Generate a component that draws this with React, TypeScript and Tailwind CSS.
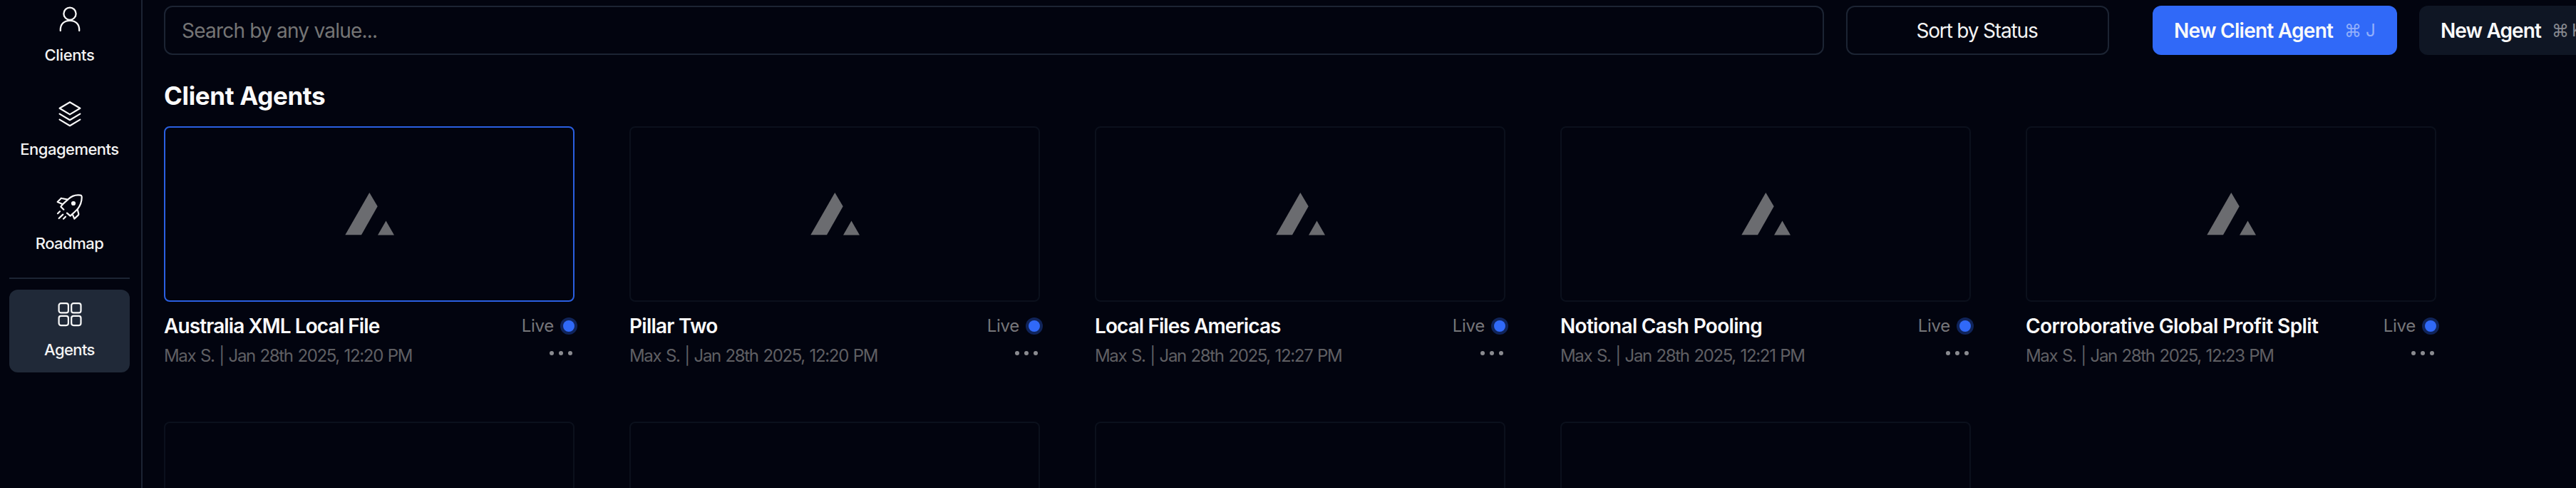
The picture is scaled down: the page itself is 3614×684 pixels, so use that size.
import type { ReactNode } from "react";

const stroke = {
  fill: "none",
  stroke: "#f8f8f8",
  strokeLinecap: "round",
  strokeLinejoin: "round",
} as const;

function UserIcon() {
  return (
    <svg className="size-10" viewBox="0 0 40 40" {...stroke} strokeWidth="2.3">
      <circle cx="20" cy="12.2" r="8.6" />
      <path d="M6.8 36v-1.2c0-8 5.2-13 13.2-13s13.2 5 13.2 13V36" />
    </svg>
  );
}

function LayersIcon() {
  return (
    <svg className="size-10" viewBox="0 0 40 40" {...stroke} strokeWidth="2.2">
      <path d="M20 4.2 34.4 12.8 20 21.4 5.6 12.8Z" />
      <path d="M5.6 20.6 20 29.2 34.4 20.6" />
      <path d="M5.6 28.6 20 37.2 34.4 28.6" />
    </svg>
  );
}

function RocketIcon() {
  return (
    <svg className="size-10" viewBox="234 36 120 120" {...stroke} strokeWidth="6.6">
      <path d="M268 104 256 92Q260 84 287 61C299 49 319 41 339 44Q343 44.5 344 50C345 68 339 86 326 103Q312 117 296 131L282 119" />
      <path d="M284 62 260 57Q257 56 255 59L242 72 262 81" />
      <path d="M326 103 331 123Q331 126 329 128L313 143 305 124" />
      <path d="M252 112 243 121M265 125 248 141M276 134 267 143" />
      <circle cx="309" cy="78" r="6" fill="#f8f8f8" />
    </svg>
  );
}

function GridIcon() {
  return (
    <svg className="size-10" viewBox="0 0 40 40" {...stroke} strokeWidth="2.2">
      <rect x="4.6" y="5.1" width="13.3" height="13.3" rx="3" />
      <rect x="22.2" y="5.1" width="13.3" height="13.3" rx="3" />
      <rect x="4.6" y="22.8" width="13.3" height="13.3" rx="3" />
      <rect x="22.2" y="22.8" width="13.3" height="13.3" rx="3" />
    </svg>
  );
}

function NavItem({ icon, label, spacing, active = false }: { icon: ReactNode; label: string; spacing: string; active?: boolean }) {
  return (
    <a className={`flex h-[116px] w-full shrink-0 flex-col items-center rounded-xl pt-3.5 ${active ? "bg-[#202938]" : ""}`}>
      {icon}
      <span className={`mt-[15px] text-[22px] leading-[30px] font-medium text-[#f4f4f4] ${spacing}`}>{label}</span>
    </a>
  );
}

function Logo() {
  return (
    <svg className="h-[60px] w-[69px]" viewBox="0 0 69 60" fill="#6b6c70">
      <path d="M0.3 59.3 34.3 0 45.7 19.3 23 59.3Z" />
      <path d="M46 59.6 57.5 39.5 69 59.6Z" />
    </svg>
  );
}

type Agent = { title: string; spacing: string; time: string };

const agents: Agent[] = [
  { title: "Australia XML Local File", spacing: "tracking-[-0.9px]", time: "12:20 PM" },
  { title: "Pillar Two", spacing: "tracking-[-0.75px]", time: "12:20 PM" },
  { title: "Local Files Americas", spacing: "tracking-[-0.92px]", time: "12:27 PM" },
  { title: "Notional Cash Pooling", spacing: "tracking-[-0.7px]", time: "12:21 PM" },
  { title: "Corroborative Global Profit Split", spacing: "tracking-[-0.58px]", time: "12:23 PM" },
];

function Preview({ selected = false, children }: { selected?: boolean; children?: ReactNode }) {
  return (
    <div className={`flex h-[246px] items-center justify-center rounded-lg border-2 ${selected ? "border-[#2a5fe0]" : "border-[#0b101c]"}`}>
      {children}
    </div>
  );
}

function AgentCard({ agent, selected }: { agent: Agent; selected: boolean }) {
  return (
    <article className="h-[414px]">
      <Preview selected={selected}>
        <Logo />
      </Preview>
      <div className="mt-[17px] flex h-[34px] items-center justify-between">
        <h3 className={`text-[28px] leading-[34px] font-semibold text-[#fafafa] ${agent.spacing}`}>{agent.title}</h3>
        <div className="flex items-center gap-[13px]">
          <span className="text-[24px] leading-[34px] tracking-[-0.3px] text-[#76767a]">Live</span>
          <span className="size-4 rounded-full bg-[#3069f8] ring-4 ring-[#10245a]" />
        </div>
      </div>
      <div className="mt-2.5 flex justify-between">
        <p className="text-[24px] leading-[30px] tracking-[-1.35px] text-[#5f5f63] [word-spacing:1.3px]">Max S. | Jan 28th 2025, {agent.time}</p>
        <div className="mt-2 mr-[3px] flex gap-[7px]">
          <i className="size-1.5 rounded-full bg-[#8a8b90]" />
          <i className="size-1.5 rounded-full bg-[#8a8b90]" />
          <i className="size-1.5 rounded-full bg-[#8a8b90]" />
        </div>
      </div>
    </article>
  );
}

export default function App() {
  return (
    <div className="flex h-[684px] w-[3614px] overflow-hidden bg-[#02040f] font-['Inter',sans-serif]">
      <nav className="h-full w-[200px] shrink-0 overflow-hidden border-r-2 border-[#1c2433] pr-4 pl-[13px]">
        <div className="-mt-[7px] flex flex-col gap-4">
          <NavItem icon={<UserIcon />} label="Clients" spacing="tracking-[-0.36px]" />
          <NavItem icon={<LayersIcon />} label="Engagements" spacing="tracking-[-0.52px]" />
          <NavItem icon={<RocketIcon />} label="Roadmap" spacing="tracking-[-0.51px]" />
        </div>
        <hr className="mt-4 mb-[15px] border-t-2 border-[#1c2433]" />
        <NavItem icon={<GridIcon />} label="Agents" spacing="tracking-[-0.6px]" active />
      </nav>

      <main className="w-[3414px] shrink-0 pt-2 pl-[30px]">
        <div className="flex h-[69px] text-[28px] leading-[34px] whitespace-nowrap">
          <div className="flex w-[2329px] shrink-0 items-center rounded-xl border-2 border-[#1c2433] pl-[23px] tracking-[-0.79px] text-[#757575]">
            Search by any value...
          </div>
          <button className="ml-[31px] w-[369px] shrink-0 rounded-xl border-2 border-[#1c2433] pr-0.5 tracking-[-1.17px] text-[#f4f4f4]">
            Sort by Status
          </button>
          <button className="ml-[61px] flex w-[343px] shrink-0 items-center rounded-xl bg-[#3069f8] pl-[30px] text-[#fafafa]">
            <span className="w-[239px] text-left font-semibold tracking-[-0.73px]">New Client Agent</span>
            <span className="w-[30px] text-left text-[24px] text-[#93b0fb]">⌘</span>
            <span className="text-[24px] text-[#93b0fb]">J</span>
          </button>
          <button className="ml-[31px] flex w-[270px] shrink-0 items-center rounded-xl bg-[#0f1624] pl-[30px] text-[#fafafa]">
            <span className="w-[156px] text-left font-semibold tracking-[-0.89px]">New Agent</span>
            <span className="w-[28px] text-left text-[24px] text-[#86898f]">⌘</span>
            <span className="text-[24px] text-[#86898f]">K</span>
          </button>
        </div>

        <h2 className="mt-[37px] text-[35px] leading-[40px] font-bold tracking-[-0.35px] text-[#fafafa]">Client Agents</h2>

        <section className="mt-[23px] grid w-[3188px] grid-cols-5 gap-x-[77px]">
          {agents.map((agent, i) => (
            <AgentCard key={agent.title} agent={agent} selected={i === 0} />
          ))}
          <Preview />
          <Preview />
          <Preview />
          <Preview />
        </section>
      </main>
    </div>
  );
}
